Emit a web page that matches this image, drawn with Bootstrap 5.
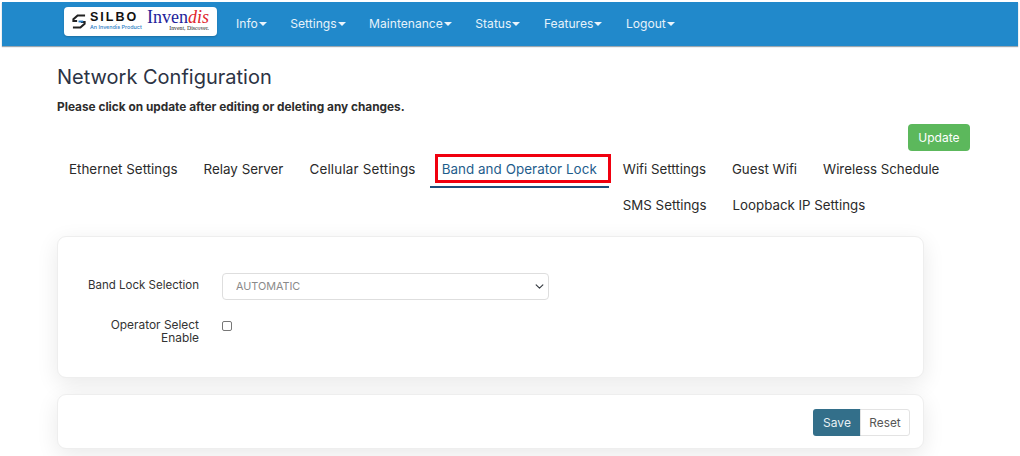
<!DOCTYPE html>
<html lang="en"><head><meta charset="utf-8"><title>Network Configuration</title>
<link href="https://cdn.jsdelivr.net/npm/bootstrap@5.3.0/dist/css/bootstrap.min.css" rel="stylesheet">
<style>
html,body{height:456px;overflow:hidden}
body{font-family:Inter,"Open Sans",sans-serif;background:#fff;color:#2b2b2b}
.topbar{margin:2px 2px 0;height:44px;background:#2189cb;box-shadow:0 1px 1px #9aa7b0;padding-left:62px}
.brandbox{width:153px;height:29px;margin-bottom:6px;background:#fff;border-radius:4px;padding:0 8px 0 8px;box-shadow:0 1px 2px rgba(0,0,0,.2);flex:none}
.silbo{font:700 12.500px/11px "Liberation Sans",sans-serif;letter-spacing:2px;color:#111}
.silbo-sub{font:500 5.400px/6px Inter,sans-serif;color:#2b7cc4;margin-top:1px}
.inv{font:400 18px/15px "Liberation Serif",serif;color:#22229a;white-space:nowrap}
.inv i{color:#e0242c}
.inv-sub{font:400 5.800px/7px "Liberation Serif",serif;color:#222;text-align:right}
.menu{margin-left:19px;gap:23.500px;font-size:12.100px;color:#e6f2fa}
.menu a{color:#e6f2fa;text-decoration:none;white-space:nowrap}
.menu a::after{content:"";display:inline-block;margin-left:1px;vertical-align:2px;border-top:4px solid #eaf4fb;border-left:4px solid transparent;border-right:4px solid transparent}
.pagewrap{padding:18px 50px 0 57px}
.pagewrap h1{font-size:20px;font-weight:400;line-height:26px;color:#2c3344;margin:0}
.hint{font-size:11.850px;font-weight:700;line-height:16px;margin:9px 0 0;color:#2d2d2d}
.upd{margin:9px 0 0;height:27px}
.upd .btn{background:#5cb85c;border:0;color:#fff;font-size:12px;line-height:15px;padding:6px 10.500px;border-radius:4px}
.tabsrow{margin-top:0;font-size:13.400px;color:#2a2a2a}
.tabitem{padding:0 12px;height:36px;line-height:36px;white-space:nowrap;color:#2a2a2a;text-decoration:none;display:block}
.tabgroup-a{column-gap:2px;flex:none}
.tabgroup-b{flex:1;column-gap:2px;margin-left:2px;align-content:flex-start;font-size:13.300px}
.tab-cell{letter-spacing:.2px}
.tabitem.act{color:#1f5d8c;position:relative;border-bottom:2px solid #1d4f7c;height:37px;padding:0 12px;letter-spacing:.05px}
.redmark{position:absolute;left:5px;right:-2px;top:3px;height:29px;border:3px solid #f0000f}
.panel{width:867px;background:#fff;border:1px solid #eee;border-radius:9px;box-shadow:0 6px 22px rgba(0,0,0,.09)}
.panel-a{height:142px;margin-top:13px;padding:36px 0 0 0}
.panel-b{height:55px;margin-top:16px;padding:14px 13px 0 0}
.flabel{width:141px;text-align:right;font-size:11.500px;line-height:13px;flex:none;color:#333}
.lbl-up{padding-bottom:3px}
.lbl-wrap{padding-left:26px;font-size:11.900px}
.fsel{width:327px;height:27px;margin-left:23px;font-size:10.800px;color:#8a8a8a;padding:2px 13px 0;border:1px solid #dedede;border-radius:4px;background-size:11px 9px;background-position:right 3px center}
.fchk{width:10px;height:10px;margin:3px 0 0 23px;border:1px solid #777;border-radius:2px;background:#fff;flex:none}
.row-b{margin-top:18px}
.bgroup .btn{font-size:12px;line-height:15px;padding:6px 0;height:27px;border-radius:3px}
.bgroup .bsave{background:#336f8a;color:#e8f0f4;border:0;width:48px}
.bgroup .breset{background:#fff;color:#555;border:1px solid #e3e3e3;width:50px;font-size:11.800px}
</style></head><body>
<header class="topbar d-flex align-items-center">
  <div class="brandbox d-flex align-items-center justify-content-between">
    <div class="d-flex align-items-center gap-1">
      <svg width="14" height="17" viewBox="0 0 15 17" aria-hidden="true"><path d="M14 2H6L1.500 6v2h4M1 15h8l4.500-4V9h-4" fill="none" stroke="#222" stroke-width="2.200"/><path d="M7 8.500h5" stroke="#2b7cc4" stroke-width="2"/></svg>
      <div><div class="silbo">SILBO</div><div class="silbo-sub">An Invendis Product</div></div>
    </div>
    <div><div class="inv">Inven<i>dis</i></div><div class="inv-sub">Invent, Discover.</div></div>
  </div>
  <nav class="menu d-flex">
    <a href="#">Info</a><a href="#">Settings</a><a href="#">Maintenance</a><a href="#">Status</a><a href="#">Features</a><a href="#">Logout</a>
  </nav>
</header>
<main class="pagewrap">
  <h1>Network Configuration</h1>
  <p class="hint">Please click on update after editing or deleting any changes.</p>
  <div class="upd d-flex justify-content-end"><button class="btn" type="button">Update</button></div>
  <div class="tabsrow d-flex">
    <div class="tabgroup-a d-flex align-items-start">
      <a class="tabitem" href="#">Ethernet Settings</a>
      <a class="tabitem" href="#">Relay Server</a>
      <a class="tabitem tab-cell" href="#">Cellular Settings</a>
      <a class="tabitem act" href="#"><span class="redmark"></span>Band and Operator Lock</a>
    </div>
    <div class="tabgroup-b d-flex flex-wrap">
      <a class="tabitem" href="#">Wifi Setttings</a>
      <a class="tabitem" href="#">Guest Wifi</a>
      <a class="tabitem" href="#">Wireless Schedule</a>
      <a class="tabitem" href="#">SMS Settings</a>
      <a class="tabitem" href="#">Loopback IP Settings</a>
    </div>
  </div>
  <section class="panel panel-a">
    <div class="d-flex align-items-center">
      <label class="flabel lbl-up" for="bandsel">Band Lock Selection</label>
      <select class="form-select fsel" id="bandsel"><option>AUTOMATIC</option></select>
    </div>
    <div class="d-flex align-items-start row-b">
      <label class="flabel lbl-wrap">Operator Select Enable</label>
      <span class="fchk"></span>
    </div>
  </section>
  <section class="panel panel-b d-flex justify-content-end">
    <div class="btn-group bgroup align-self-start"><button class="btn bsave" type="button">Save</button><button class="btn breset" type="button">Reset</button></div>
  </section>
</main>
</body></html>
